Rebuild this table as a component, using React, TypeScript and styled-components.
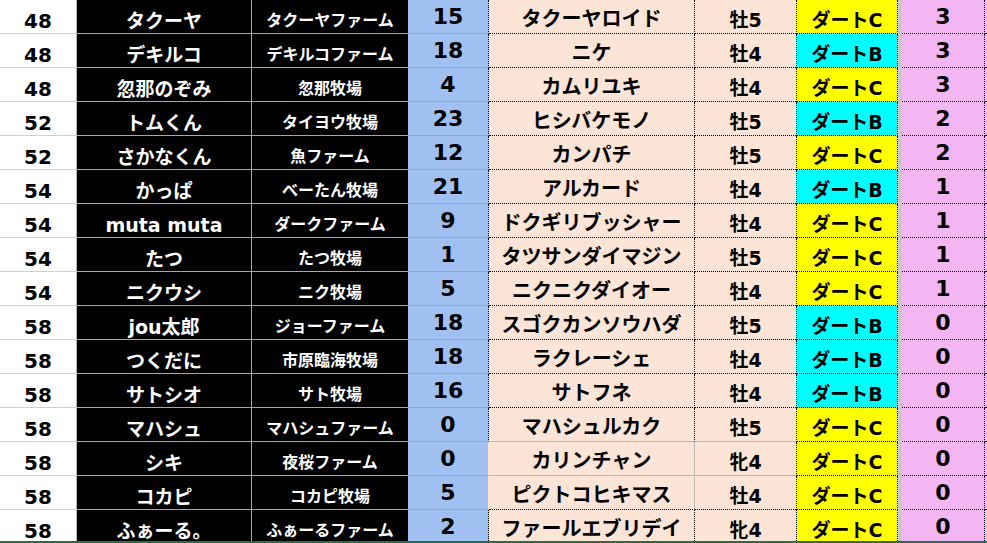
import React from "react";
import styled, { createGlobalStyle, css } from "styled-components";

const GlobalStyle = createGlobalStyle`
  html, body { margin: 0; padding: 0; background: #ffffff; }
  body {
    font-family: "DejaVu Sans", "Noto Sans CJK JP", sans-serif;
    font-weight: 700;
    overflow: hidden;
  }
  * { box-sizing: border-box; }
`;

type Grade = "B" | "C";
type Edge = "dot" | "gray" | "none";

interface Entry {
  rank: number;
  owner: string;
  farm: string;
  pop: number;
  horse: string;
  sex: string;
  grade: Grade;
  pts: number;
  vEdge?: Edge;
  hEdge?: Edge;
}

const entries: Entry[] = [
  { rank: 48, owner: "タクーヤ", farm: "タクーヤファーム", pop: 15, horse: "タクーヤロイド", sex: "牡5", grade: "C", pts: 3 },
  { rank: 48, owner: "デキルコ", farm: "デキルコファーム", pop: 18, horse: "ニケ", sex: "牡4", grade: "B", pts: 3 },
  { rank: 48, owner: "忽那のぞみ", farm: "忽那牧場", pop: 4, horse: "カムリユキ", sex: "牡4", grade: "C", pts: 3 },
  { rank: 52, owner: "トムくん", farm: "タイヨウ牧場", pop: 23, horse: "ヒシバケモノ", sex: "牡5", grade: "B", pts: 2 },
  { rank: 52, owner: "さかなくん", farm: "魚ファーム", pop: 12, horse: "カンパチ", sex: "牡5", grade: "C", pts: 2 },
  { rank: 54, owner: "かっぱ", farm: "べーたん牧場", pop: 21, horse: "アルカード", sex: "牡4", grade: "B", pts: 1 },
  { rank: 54, owner: "muta muta", farm: "ダークファーム", pop: 9, horse: "ドクギリブッシャー", sex: "牡4", grade: "C", pts: 1 },
  { rank: 54, owner: "たつ", farm: "たつ牧場", pop: 1, horse: "タツサンダイマジン", sex: "牡5", grade: "C", pts: 1 },
  { rank: 54, owner: "ニクウシ", farm: "ニク牧場", pop: 5, horse: "ニクニクダイオー", sex: "牡4", grade: "C", pts: 1 },
  { rank: 58, owner: "jou太郎", farm: "ジョーファーム", pop: 18, horse: "スゴクカンソウハダ", sex: "牡5", grade: "B", pts: 0 },
  { rank: 58, owner: "つくだに", farm: "市原臨海牧場", pop: 18, horse: "ラクレーシェ", sex: "牡4", grade: "B", pts: 0 },
  { rank: 58, owner: "サトシオ", farm: "サト牧場", pop: 16, horse: "サトフネ", sex: "牡4", grade: "B", pts: 0 },
  { rank: 58, owner: "マハシュ", farm: "マハシュファーム", pop: 0, horse: "マハシュルカク", sex: "牡5", grade: "C", pts: 0, hEdge: "gray" },
  { rank: 58, owner: "シキ", farm: "夜桜ファーム", pop: 0, horse: "カリンチャン", sex: "牝4", grade: "C", pts: 0, vEdge: "gray", hEdge: "gray" },
  { rank: 58, owner: "コカピ", farm: "コカピ牧場", pop: 5, horse: "ピクトコヒキマス", sex: "牡4", grade: "C", pts: 0, vEdge: "gray" },
  { rank: 58, owner: "ふぁーる。", farm: "ふぁーるファーム", pop: 2, horse: "ファールエブリデイ", sex: "牝4", grade: "C", pts: 0 },
];

const DOT = "1px dotted #000000";
const GRAY = "1px solid #b8b8b8";

const edge = (e: Edge, dotted: string, gray: string) =>
  e === "dot" ? dotted : e === "gray" ? gray : "0 none";

const Page = styled.div`
  width: 987px;
  height: 543px;
  display: flex;
  flex-direction: column;
  overflow: hidden;
`;

const Sheet = styled.div`
  flex: 1;
  min-height: 0;
  display: flex;
  flex-direction: column;
`;

const GreenRule = styled.div`
  flex: none;
  height: 2px;
  background: #1f7244;
`;

const Row = styled.div<{ $h: number }>`
  flex: none;
  height: ${(p) => p.$h}px;
  display: flex;
`;

const Cell = styled.div<{ $w: number; $dy: number; $size: number }>`
  flex: none;
  width: ${(p) => p.$w}px;
  height: 100%;
  display: flex;
  align-items: center;
  justify-content: center;
  padding-top: ${(p) => p.$dy}px;
  font-size: ${(p) => p.$size}px;
  line-height: 1;
  white-space: nowrap;
`;

const Rank = styled(Cell)<{ $last: boolean }>`
  background: #ffffff;
  color: #000000;
  border-right: 1px solid #b4b4b4;
  border-bottom: ${(p) => (p.$last ? "0 none" : "1px solid #d0d0d0")};
`;

const Owner = styled(Cell)<{ $last: boolean }>`
  background: #000000;
  color: #ffffff;
  border-right: 1px solid #a8a8a8;
  border-bottom: ${(p) => (p.$last ? "0 none" : "1px solid #a8a8a8")};
`;

const Farm = styled(Cell)<{ $last: boolean }>`
  background: #000000;
  color: #ffffff;
  border-bottom: ${(p) => (p.$last ? "0 none" : "1px solid #a8a8a8")};
`;

const Pop = styled(Cell)<{ $v: Edge; $last: boolean }>`
  background: #9fc0f0;
  color: #000000;
  border-bottom: ${(p) => (p.$last ? "0 none" : "1px solid #8ba8da")};
  border-right: ${(p) => (p.$v === "dot" ? DOT : "1px solid #fce4d6")};
`;

const Horse = styled(Cell)<{ $v: Edge; $h: Edge }>`
  background: #fce4d6;
  color: #000000;
  border-right: ${(p) => edge(p.$v, DOT, GRAY)};
  border-bottom: ${(p) => edge(p.$h, DOT, GRAY)};
`;

const Sex = styled(Cell)<{ $h: Edge }>`
  background: #fce4d6;
  color: #000000;
  border-bottom: ${(p) => edge(p.$h, DOT, GRAY)};
`;

const GradeCell = styled(Cell)<{ $grade: Grade; $h: Edge }>`
  color: #000000;
  border-left: ${DOT};
  border-right: ${DOT};
  border-bottom: ${(p) => edge(p.$h, DOT, GRAY)};
  ${(p) =>
    p.$grade === "B"
      ? css`
          background: #00ffff;
        `
      : css`
          background: #ffff00;
        `}
`;

const Gap = styled.div`
  flex: none;
  width: 4px;
  height: 100%;
  background: #c8c8c8;
`;

const Points = styled(Cell)<{ $h: Edge }>`
  background: #f4b6f2;
  color: #000000;
  border-right: ${DOT};
  border-bottom: ${(p) => edge(p.$h, DOT, GRAY)};
`;

const Tail = styled.div<{ $h: Edge }>`
  flex: 1;
  height: 100%;
  background: #f4b6f2;
  border-bottom: ${(p) => edge(p.$h, DOT, GRAY)};
`;

export default function App() {
  return (
    <>
      <GlobalStyle />
      <Page>
        <Sheet>
          {entries.map((e, i) => {
            const last = i === entries.length - 1;
            const v: Edge = e.vEdge ?? "dot";
            const h: Edge = last ? "none" : e.hEdge ?? "dot";
            const h2: Edge = last ? "none" : "dot";
            const k = last ? 2 : 0;
            return (
              <Row key={i} $h={last ? 31 : 34}>
                <Rank $w={77} $dy={9 + k} $size={20} $last={last}>
                  {e.rank}
                </Rank>
                <Owner $w={175} $dy={9 + k} $size={19} $last={last}>
                  {e.owner}
                </Owner>
                <Farm $w={156} $dy={9 + k} $size={16} $last={last}>
                  {e.farm}
                </Farm>
                <Pop $w={81} $dy={0 + k} $size={22} $v={v} $last={last}>
                  {e.pop}
                </Pop>
                <Horse $w={206} $dy={4 + k} $size={20} $v={v} $h={h}>
                  {e.horse}
                </Horse>
                <Sex $w={101} $dy={8 + k} $size={19} $h={h}>
                  {e.sex}
                </Sex>
                <GradeCell $w={102} $dy={7 + k} $size={19} $grade={e.grade} $h={h2}>
                  ダート{e.grade}
                </GradeCell>
                <Gap />
                <Points $w={83} $dy={1 + k} $size={22} $h={h2}>
                  {e.pts}
                </Points>
                <Tail $h={h2} />
              </Row>
            );
          })}
        </Sheet>
        <GreenRule />
      </Page>
    </>
  );
}
